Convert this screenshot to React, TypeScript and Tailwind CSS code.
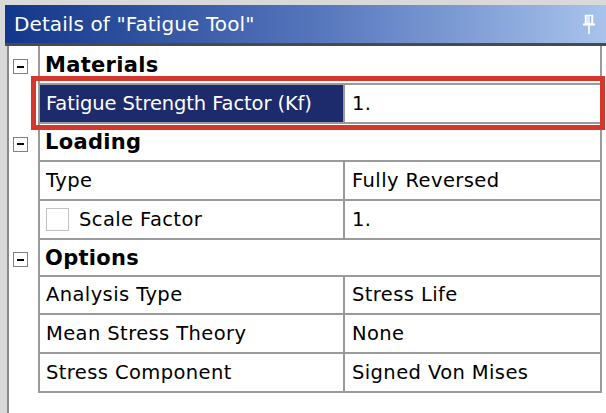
import React from "react";

type Row =
  | { kind: "header"; label: string; h: string }
  | { kind: "data"; label: string; value: string; h: string; selected?: boolean; checkbox?: boolean };

const rows: Row[] = [
  { kind: "header", label: "Materials", h: "h-[39px]" },
  { kind: "data", label: "Fatigue Strength Factor (Kf)", value: "1.", h: "h-[39px]", selected: true },
  { kind: "header", label: "Loading", h: "h-[38px]" },
  { kind: "data", label: "Type", value: "Fully Reversed", h: "h-[39px]" },
  { kind: "data", label: "Scale Factor", value: "1.", h: "h-[39px]", checkbox: true },
  { kind: "header", label: "Options", h: "h-[37px]" },
  { kind: "data", label: "Analysis Type", value: "Stress Life", h: "h-[38px]" },
  { kind: "data", label: "Mean Stress Theory", value: "None", h: "h-[39px]" },
  { kind: "data", label: "Stress Component", value: "Signed Von Mises", h: "h-[39px]" },
];

function MinusBox() {
  return (
    <div className="w-[15px] h-[15px] border border-[#7f7f7f] bg-white flex items-center justify-center">
      <div className="w-[7px] h-[2px] bg-black" />
    </div>
  );
}

function Pin() {
  return (
    <svg width="14" height="21" viewBox="0 0 14 21" fill="none">
      <rect x="3.5" y="1.5" width="7" height="8" fill="#dce8fa" stroke="#ffffff" strokeWidth="1.5" />
      <line x1="8.5" y1="2" x2="8.5" y2="9" stroke="#9fb8e0" strokeWidth="1" />
      <line x1="1" y1="10.5" x2="13" y2="10.5" stroke="#ffffff" strokeWidth="2" />
      <line x1="7" y1="11" x2="7" y2="20" stroke="#ffffff" strokeWidth="1.6" />
    </svg>
  );
}

export default function App() {
  return (
    <div
      className="relative w-[606px] h-[413px] bg-[#d9d9d9] pt-[5px] pl-[5px] flex flex-col overflow-hidden"
      style={{ fontFamily: '"DejaVu Sans", Verdana, sans-serif' }}
    >
      <div className="h-[38px] shrink-0 flex items-center justify-between pl-[9px] pr-[10px] bg-gradient-to-r from-[#12368a] via-[#5373ba] to-[#a8c3ec] text-white text-[20px]">
        <span className="tracking-[0.1px]">{'Details of "Fatigue Tool"'}</span>
        <Pin />
      </div>
      <div className="h-[3px] shrink-0 bg-[#4a4a4a]" />
      <div className="flex-1 ml-[2px] border-l-2 border-[#8a8a8a] bg-white pr-[4px] flex flex-col">
        {rows.map((r, i) => (
          <div key={i} className={`flex ${r.h}`}>
            <div className="w-[29px] shrink-0 flex items-center pl-[4px] pt-[2px]">
              {r.kind === "header" ? <MinusBox /> : null}
            </div>
            {r.kind === "header" ? (
              <div className="flex-1 flex items-center pt-[2px] border-l-2 border-r-2 border-b-2 border-[#9a9a9a] pl-[5px] text-[21px] font-bold text-black tracking-[0.3px]">
                {r.label}
              </div>
            ) : (
              <div className="flex-1 flex border-l-2 border-r-2 border-b-2 border-[#9a9a9a] text-[19.5px] text-black">
                <div
                  className={`w-[305px] shrink-0 flex items-center border-r-2 border-[#9a9a9a] pl-[6px] whitespace-nowrap overflow-hidden ${
                    r.selected ? "bg-[#1d2a6c] text-white tracking-[-0.1px]" : "tracking-[0.4px]"
                  }`}
                >
                  {r.checkbox ? (
                    <>
                      <div className="w-[23px] h-[23px] border border-[#c2c2c2] bg-white mr-[10px]" />
                      <span>{r.label}</span>
                    </>
                  ) : (
                    <span>{r.label}</span>
                  )}
                </div>
                <div className="flex-1 flex items-center pl-[7px] tracking-[0.4px]">{r.value}</div>
              </div>
            )}
          </div>
        ))}
      </div>
      <div className="absolute left-[31px] top-[76px] w-[574px] h-[54px] border-[5px] border-[#d4382c]" />
    </div>
  );
}
